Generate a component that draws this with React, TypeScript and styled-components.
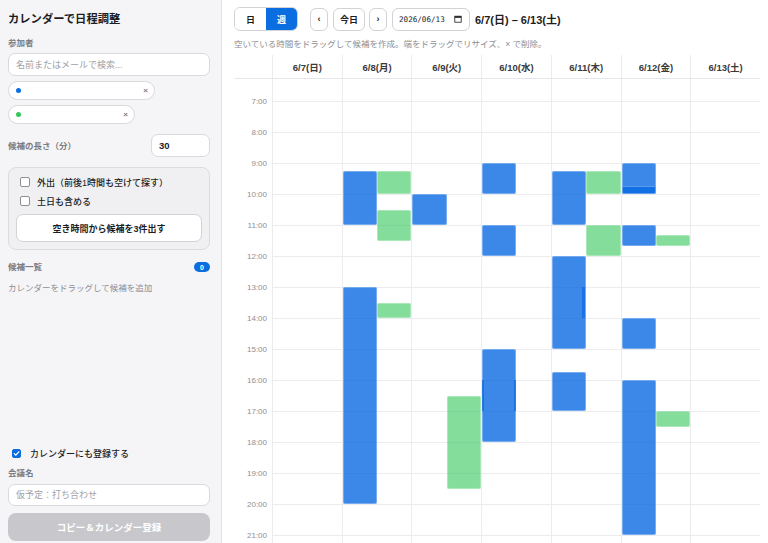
import React, { useLayoutEffect, useRef } from "react";
import styled, { createGlobalStyle, css } from "styled-components";

const HOUR = 31;
const FONT = `"Liberation Sans", "Noto Sans CJK JP", sans-serif`;

const Global = createGlobalStyle`
  html, body { margin: 0; padding: 0; background: #fff; }
  body { font-family: ${FONT}; color: #1d1d1f; }
  * { box-sizing: border-box; }
  input { font-family: ${FONT}; }
`;

const Shell = styled.div`
  display: flex;
  width: 768px;
  height: 543px;
  overflow: hidden;
`;

/* ---------- Sidebar ---------- */
const Sidebar = styled.aside`
  width: 222px;
  flex: none;
  background: #f5f5f7;
  border-right: 1px solid #e3e3e6;
  display: flex;
  flex-direction: column;
  padding: 0 11px 2px 8px;
`;

const Title = styled.h1`
  margin: 12px 0 0;
  font-size: 11.3px;
  line-height: 14px;
  font-weight: 700;
  color: #1d1d1f;
`;

const FieldLabel = styled.div<{ $mt?: number }>`
  margin-top: ${(p) => p.$mt ?? 0}px;
  font-size: 8.5px;
  line-height: 12px;
  font-weight: 600;
  color: #7c7c81;
`;

const TextInput = styled.input<{ $mt?: number; $h?: number }>`
  display: block;
  width: 100%;
  margin-top: ${(p) => p.$mt ?? 0}px;
  height: ${(p) => p.$h ?? 23}px;
  border: 1px solid #d9d9de;
  border-radius: 7px;
  background: #fff;
  padding: 0 7px;
  font-size: 9px;
  color: #1d1d1f;
  outline: none;
  &::placeholder { color: #a1a1a6; }
`;

const Chip = styled.div<{ $w: number; $mt: number }>`
  display: flex;
  align-items: center;
  width: ${(p) => p.$w}px;
  height: 19px;
  margin-top: ${(p) => p.$mt}px;
  padding: 0 6px 0 7px;
  background: #fff;
  border: 1px solid #d9d9de;
  border-radius: 10px;
`;

const Dot = styled.span<{ $c: string }>`
  width: 5px;
  height: 5px;
  border-radius: 50%;
  background: ${(p) => p.$c};
`;

const ChipClose = styled.span`
  margin-left: auto;
  font-size: 8px;
  line-height: 1;
  color: #7c7c80;
  font-weight: 700;
`;

const LengthRow = styled.div`
  margin-top: 10px;
  display: flex;
  align-items: center;
  justify-content: space-between;
`;

const NumberBox = styled.div`
  width: 59px;
  height: 23px;
  display: flex;
  align-items: center;
  padding: 0 7px;
  background: #fff;
  border: 1px solid #d9d9de;
  border-radius: 7px;
  font-size: 9.5px;
  font-weight: 600;
`;

const OptionsBox = styled.div`
  margin-top: 10px;
  border: 1px solid #dcdce0;
  border-radius: 8px;
  background: #f0f0f2;
  padding: 7px;
  display: flex;
  flex-direction: column;
`;

const CheckRow = styled.label<{ $mt?: number; $gap?: number }>`
  display: flex;
  align-items: center;
  gap: ${(p) => p.$gap ?? 7}px;
  height: 14px;
  margin-top: ${(p) => p.$mt ?? 0}px;
  padding-left: 4px;
  font-size: 9px;
  font-weight: 500;
  color: #1d1d1f;
`;

const CheckBox = styled.span<{ $on?: boolean; $size?: number }>`
  width: ${(p) => p.$size ?? 10}px;
  height: ${(p) => p.$size ?? 10}px;
  flex: none;
  border-radius: 2px;
  display: flex;
  align-items: center;
  justify-content: center;
  ${(p) =>
    p.$on
      ? css`
          background: #0a6ee0;
          border: 1px solid #0a6ee0;
        `
      : css`
          background: #fff;
          border: 1px solid #8e8e93;
        `}
`;

const Button = styled.button<{ $mt?: number; $disabled?: boolean }>`
  display: flex;
  align-items: center;
  justify-content: center;
  width: 100%;
  height: 28px;
  margin-top: ${(p) => p.$mt ?? 0}px;
  border-radius: 7px;
  font-family: ${FONT};
  font-size: 9px;
  font-weight: 700;
  cursor: pointer;
  ${(p) =>
    p.$disabled
      ? css`
          background: #c7c7cc;
          border: none;
          color: #fff;
          font-size: 9.5px;
          border-radius: 8px;
        `
      : css`
          background: #fff;
          border: 1px solid #d2d2d7;
          color: #1d1d1f;
        `}
`;

const ListHeader = styled.div`
  margin-top: 11px;
  height: 12px;
  display: flex;
  align-items: center;
  justify-content: space-between;
`;

const Badge = styled.span`
  min-width: 16px;
  height: 10px;
  border-radius: 5px;
  background: #0a6ee0;
  color: #fff;
  font-size: 7px;
  font-weight: 700;
  display: flex;
  align-items: center;
  justify-content: center;
`;

const Hint = styled.div`
  margin-top: 9px;
  font-size: 8.5px;
  line-height: 12px;
  color: #8e8e93;
`;

const Spacer = styled.div`
  flex: 1;
`;

/* ---------- Main ---------- */
const Main = styled.main`
  flex: 1;
  min-width: 0;
  display: flex;
  flex-direction: column;
  padding: 7px 8px 0 12px;
`;

const Toolbar = styled.div`
  display: flex;
  align-items: center;
  height: 24px;
`;

const Segmented = styled.div`
  display: flex;
  border: 1px solid #d2d2d7;
  border-radius: 6px;
  overflow: hidden;
  background: #fff;
`;

const SegButton = styled.div<{ $active?: boolean }>`
  width: 31px;
  height: 22px;
  display: flex;
  align-items: center;
  justify-content: center;
  font-size: 9px;
  font-weight: 600;
  ${(p) =>
    p.$active
      ? css`
          background: #0a6ee0;
          color: #fff;
        `
      : css`
          background: #fff;
          color: #1d1d1f;
        `}
`;

const NavButton = styled.div<{ $w: number; $ml: number }>`
  width: ${(p) => p.$w}px;
  height: 23px;
  margin-left: ${(p) => p.$ml}px;
  display: flex;
  align-items: center;
  justify-content: center;
  background: #fff;
  border: 1px solid #d2d2d7;
  border-radius: 6px;
  font-size: 9px;
  font-weight: 600;
  color: #1d1d1f;
`;

const DateBox = styled.div`
  width: 78px;
  height: 23px;
  margin-left: 5px;
  display: flex;
  align-items: center;
  justify-content: space-between;
  padding: 0 7px 0 6px;
  background: #fff;
  border: 1px solid #d2d2d7;
  border-radius: 6px;
  font-family: "DejaVu Sans Mono", monospace;
  font-size: 7.6px;
  color: #1d1d1f;
`;

const RangeTitle = styled.div`
  margin-left: 5px;
  font-size: 11px;
  font-weight: 700;
  color: #1d1d1f;
`;

const Helper = styled.div`
  margin-top: 6.5px;
  font-size: 8.5px;
  line-height: 12px;
  color: #8e8e93;
`;

const Calendar = styled.div`
  margin-top: 5.5px;
  flex: 1;
  min-height: 0;
  display: flex;
  flex-direction: column;
`;

const GRID = css`
  display: grid;
  grid-template-columns: 38px repeat(7, 1fr);
`;

const HeaderRow = styled.div`
  ${GRID};
  height: 24px;
  flex: none;
  border-bottom: 1px solid #e5e5ea;
`;

const HeaderCell = styled.div<{ $gutter?: boolean }>`
  display: flex;
  align-items: center;
  justify-content: center;
  font-size: 9.5px;
  font-weight: 700;
  color: #3a3a3c;
  border-left: ${(p) => (p.$gutter ? "none" : "1px solid #ececef")};
`;

const Body = styled.div`
  flex: 1;
  min-height: 0;
  overflow-y: auto;
  scrollbar-width: none;
  &::-webkit-scrollbar { display: none; }
`;

const BodyGrid = styled.div`
  ${GRID};
  height: ${24 * HOUR}px;
`;

const Gutter = styled.div`
  position: relative;
`;

const TimeLabel = styled.span`
  position: absolute;
  right: 5px;
  transform: translateY(-50%);
  font-size: 8px;
  color: #8e8e93;
`;

const DayColumn = styled.div`
  position: relative;
  border-left: 1px solid #ececef;
  background-image: linear-gradient(to bottom, #ececef 1px, transparent 1px);
  background-size: 100% ${HOUR}px;
`;

type Kind = "busy" | "cand" | "edges" | "strip";

const Event = styled.div<{ $lane: "L" | "R"; $kind: Kind }>`
  position: absolute;
  left: ${(p) => (p.$lane === "L" ? "0" : "50%")};
  width: 50%;
  border-radius: 2px;
  ${(p) =>
    p.$kind === "busy" &&
    css`
      background: rgba(10, 106, 226, 0.8);
      box-shadow: inset 0 0 0 1px rgba(255, 255, 255, 0.3);
    `}
  ${(p) =>
    p.$kind === "cand" &&
    css`
      background: rgba(52, 199, 89, 0.6);
      box-shadow: inset 0 0 0 1px rgba(255, 255, 255, 0.3);
    `}
  ${(p) =>
    p.$kind === "edges" &&
    css`
      border-left: 2px solid rgba(10, 106, 226, 0.7);
      border-right: 2px solid rgba(10, 106, 226, 0.7);
      border-radius: 0;
    `}
  ${(p) =>
    p.$kind === "strip" &&
    css`
      left: calc(50% - 4px);
      width: 3px;
      background: rgba(10, 106, 226, 0.7);
      border-radius: 0;
    `}
`;

type Ev = { d: number; s: number; e: number; lane: "L" | "R"; kind: Kind };

const EVENTS: Ev[] = [
  { d: 1, s: 9.25, e: 11, lane: "L", kind: "busy" },
  { d: 1, s: 9.25, e: 10, lane: "R", kind: "cand" },
  { d: 1, s: 10.5, e: 11.5, lane: "R", kind: "cand" },
  { d: 1, s: 13, e: 20, lane: "L", kind: "busy" },
  { d: 1, s: 13.5, e: 14, lane: "R", kind: "cand" },
  { d: 2, s: 10, e: 11, lane: "L", kind: "busy" },
  { d: 2, s: 16.5, e: 19.5, lane: "R", kind: "cand" },
  { d: 3, s: 9, e: 10, lane: "L", kind: "busy" },
  { d: 3, s: 11, e: 12, lane: "L", kind: "busy" },
  { d: 3, s: 15, e: 18, lane: "L", kind: "busy" },
  { d: 3, s: 16, e: 17, lane: "L", kind: "edges" },
  { d: 4, s: 9.25, e: 11, lane: "L", kind: "busy" },
  { d: 4, s: 9.25, e: 10, lane: "R", kind: "cand" },
  { d: 4, s: 11, e: 12, lane: "R", kind: "cand" },
  { d: 4, s: 12, e: 15, lane: "L", kind: "busy" },
  { d: 4, s: 13, e: 14, lane: "L", kind: "strip" },
  { d: 4, s: 15.75, e: 17, lane: "L", kind: "busy" },
  { d: 5, s: 9, e: 10, lane: "L", kind: "busy" },
  { d: 5, s: 9.75, e: 10, lane: "L", kind: "busy" },
  { d: 5, s: 11, e: 11.667, lane: "L", kind: "busy" },
  { d: 5, s: 11.333, e: 11.667, lane: "R", kind: "cand" },
  { d: 5, s: 14, e: 15, lane: "L", kind: "busy" },
  { d: 5, s: 16, e: 21, lane: "L", kind: "busy" },
  { d: 5, s: 17, e: 17.5, lane: "R", kind: "cand" },
];

const DAYS = ["6/7(日)", "6/8(月)", "6/9(火)", "6/10(水)", "6/11(木)", "6/12(金)", "6/13(土)"];
const FIRST_VISIBLE = 7;
const HOURS = Array.from({ length: 24 - FIRST_VISIBLE }, (_, i) => i + FIRST_VISIBLE);

const Check = () => (
  <svg width="7" height="7" viewBox="0 0 10 10">
    <path d="M1.8 5.2 L4 7.4 L8.3 2.6" fill="none" stroke="#fff" strokeWidth="1.8" strokeLinecap="round" strokeLinejoin="round" />
  </svg>
);

const CalIcon = () => (
  <svg width="8" height="8" viewBox="0 0 10 10">
    <rect x="1" y="1.5" width="8" height="7.5" fill="none" stroke="#1d1d1f" strokeWidth="1" />
    <rect x="1" y="1.5" width="8" height="2" fill="#1d1d1f" />
  </svg>
);

export default function App() {
  const bodyRef = useRef<HTMLDivElement>(null);
  useLayoutEffect(() => {
    if (bodyRef.current) bodyRef.current.scrollTop = FIRST_VISIBLE * HOUR - 22;
  }, []);

  return (
    <>
      <Global />
      <Shell>
        <Sidebar>
          <Title>カレンダーで日程調整</Title>
          <FieldLabel $mt={11}>参加者</FieldLabel>
          <TextInput $mt={4} placeholder="名前またはメールで検索..." />
          <Chip $w={147} $mt={5}>
            <Dot $c="#0a6ee0" />
            <ChipClose>×</ChipClose>
          </Chip>
          <Chip $w={127} $mt={5}>
            <Dot $c="#34c759" />
            <ChipClose>×</ChipClose>
          </Chip>
          <LengthRow>
            <FieldLabel>候補の長さ（分）</FieldLabel>
            <NumberBox>30</NumberBox>
          </LengthRow>
          <OptionsBox>
            <CheckRow>
              <CheckBox />
              外出（前後1時間も空けて探す）
            </CheckRow>
            <CheckRow $mt={5}>
              <CheckBox />
              土日も含める
            </CheckRow>
            <Button $mt={6}>空き時間から候補を3件出す</Button>
          </OptionsBox>
          <ListHeader>
            <FieldLabel>候補一覧</FieldLabel>
            <Badge>0</Badge>
          </ListHeader>
          <Hint>カレンダーをドラッグして候補を追加</Hint>
          <Spacer />
          <CheckRow $gap={9}>
            <CheckBox $on $size={9}>
              <Check />
            </CheckBox>
            カレンダーにも登録する
          </CheckRow>
          <FieldLabel $mt={7}>会議名</FieldLabel>
          <TextInput $mt={5} $h={22} placeholder="仮予定：打ち合わせ" />
          <Button $mt={7} $disabled>
            コピー＆カレンダー登録
          </Button>
        </Sidebar>

        <Main>
          <Toolbar>
            <Segmented>
              <SegButton>日</SegButton>
              <SegButton $active>週</SegButton>
            </Segmented>
            <NavButton $w={18} $ml={12}>‹</NavButton>
            <NavButton $w={32} $ml={5}>今日</NavButton>
            <NavButton $w={18} $ml={4}>›</NavButton>
            <DateBox>
              <span>2026/06/13</span>
              <CalIcon />
            </DateBox>
            <RangeTitle>6/7(日) – 6/13(土)</RangeTitle>
          </Toolbar>
          <Helper>空いている時間をドラッグして候補を作成。端をドラッグでリサイズ、× で削除。</Helper>
          <Calendar>
            <HeaderRow>
              <HeaderCell $gutter />
              {DAYS.map((d) => (
                <HeaderCell key={d}>{d}</HeaderCell>
              ))}
            </HeaderRow>
            <Body ref={bodyRef}>
              <BodyGrid>
                <Gutter>
                  {HOURS.map((h) => (
                    <TimeLabel key={h} style={{ top: h * HOUR }}>
                      {h}:00
                    </TimeLabel>
                  ))}
                </Gutter>
                {DAYS.map((d, di) => (
                  <DayColumn key={d}>
                    {EVENTS.filter((e) => e.d === di).map((e, i) => (
                      <Event
                        key={i}
                        $lane={e.lane}
                        $kind={e.kind}
                        style={{ top: e.s * HOUR, height: (e.e - e.s) * HOUR }}
                      />
                    ))}
                  </DayColumn>
                ))}
              </BodyGrid>
            </Body>
          </Calendar>
        </Main>
      </Shell>
    </>
  );
}
